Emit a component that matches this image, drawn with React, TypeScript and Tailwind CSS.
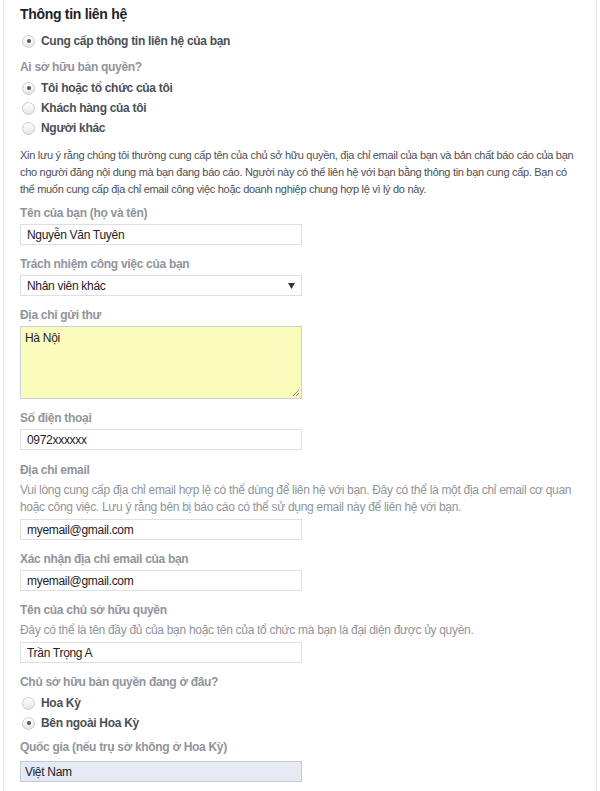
import React from "react";

function Radio({ checked, label, className = "" }: { checked?: boolean; label: string; className?: string }) {
  return (
    <div className={`flex items-center h-5 pl-[2px] ${className}`}>
      <span className="w-[13px] h-[13px] rounded-full border border-[#cbccd0] bg-gradient-to-b from-white to-[#e4e5e8] flex items-center justify-center shrink-0">
        {checked && <span className="w-[4px] h-[4px] rounded-full bg-[#50545a]" />}
      </span>
      <span className="ml-[6px] text-[12px] font-bold text-[#4b4f56] leading-4">{label}</span>
    </div>
  );
}

function Label({ children, className = "" }: { children: React.ReactNode; className?: string }) {
  return <div className={`text-[12px] font-bold text-[#90949c] leading-4 h-4 ${className}`}>{children}</div>;
}

function Input({ value, className = "" }: { value: string; className?: string }) {
  return (
    <div className={`w-[282px] h-[21px] border border-[#dddfe2] bg-white flex items-center pl-[6px] text-[12px] text-[#1d2129] ${className}`}>
      {value}
    </div>
  );
}

export default function App() {
  return (
    <div
      className="w-[600px] h-[791px] bg-white overflow-hidden tracking-[-0.3px]"
      style={{ fontFamily: '"Liberation Sans", Arial, sans-serif' }}
    >
      <div className="mx-[3px] h-full border-x border-[#e3e3e3] pl-[16px] pr-[8px] pt-[6px]">
        <div className="text-[14px] font-bold text-[#1d2129] leading-4 h-4">Thông tin liên hệ</div>
        <Radio checked label="Cung cấp thông tin liên hệ của bạn" className="mt-[9px]" />
        <Label className="mt-[8px]">Ai sở hữu bản quyền?</Label>
        <div className="mt-[3px]">
          <Radio checked label="Tôi hoặc tổ chức của tôi" />
          <Radio label="Khách hàng của tôi" />
          <Radio label="Người khác" />
        </div>
        <p className="mt-[9px] pr-[10px] text-[11px] leading-[17px] text-[#4b4f56]">
          Xin lưu ý rằng chúng tôi thường cung cấp tên của chủ sở hữu quyền, địa chỉ email của bạn và bản chất báo cáo của bạn cho người đăng nội dung mà bạn đang báo cáo. Người này có thể liên hệ với bạn bằng thông tin bạn cung cấp. Bạn có thể muốn cung cấp địa chỉ email công việc hoặc doanh nghiệp chung hợp lệ vì lý do này.
        </p>
        <Label className="mt-[7px]">Tên của bạn (họ và tên)</Label>
        <Input value="Nguyễn Văn Tuyên" className="mt-[3px]" />

        <Label className="mt-[11px]">Trách nhiệm công việc của bạn</Label>
        <div className="mt-[3px] w-[282px] h-[21px] border border-[#dddfe2] bg-white flex items-center justify-between pl-[6px] pr-[6px] text-[12px] text-[#1d2129]">
          <span>Nhân viên khác</span>
          <svg width="7" height="6" viewBox="0 0 7 6"><path d="M0 0 H7 L3.5 6 Z" fill="#333" /></svg>
        </div>

        <Label className="mt-[11px]">Địa chỉ gửi thư</Label>
        <div className="mt-[3px] relative w-[282px] h-[73px] border border-[#c9cfdb] bg-[#fafcbc] pl-[4px] pt-[3px] text-[12px] text-[#1d2129] leading-4">
          Hà Nội
          <svg className="absolute right-[1px] bottom-[1px]" width="8" height="8" viewBox="0 0 8 8">
            <path d="M7 1 L1 7 M7 4 L4 7" stroke="#8a8a8a" strokeWidth="1" />
          </svg>
        </div>

        <Label className="mt-[11px]">Số điện thoại</Label>
        <Input value="0972xxxxxx" className="mt-[3px]" />

        <Label className="mt-[12px]">Địa chỉ email</Label>
        <p className="mt-[4px] text-[12px] leading-[17px] text-[#90949c]">
          Vui lòng cung cấp địa chỉ email hợp lệ có thể dùng để liên hệ với bạn. Đây có thể là một địa chỉ email cơ quan hoặc công việc. Lưu ý rằng bên bị báo cáo có thể sử dụng email này để liên hệ với bạn.
        </p>
        <Input value="myemail@gmail.com" className="mt-[3px]" />

        <Label className="mt-[11px]">Xác nhận địa chỉ email của bạn</Label>
        <Input value="myemail@gmail.com" className="mt-[3px]" />

        <Label className="mt-[11px]">Tên của chủ sở hữu quyền</Label>
        <p className="mt-[4px] text-[12px] leading-[17px] text-[#90949c]">
          Đây có thể là tên đầy đủ của bạn hoặc tên của tổ chức mà bạn là đại diện được ủy quyền.
        </p>
        <Input value="Trần Trọng A" className="mt-[3px]" />

        <Label className="mt-[11px]">Chủ sở hữu bản quyền đang ở đâu?</Label>
        <div className="mt-[3px]">
          <Radio label="Hoa Kỳ" />
          <Radio checked label="Bên ngoài Hoa Kỳ" />
        </div>
        <Label className="mt-[6px]">Quốc gia (nếu trụ sở không ở Hoa Kỳ)</Label>
        <div className="mt-[6px] w-[282px] h-[21px] border border-[#c2c9d8] bg-[#e5eaf5] flex items-center pl-[4px] text-[12px] text-[#1d2129]">
          Việt Nam
        </div>
      </div>
    </div>
  );
}
